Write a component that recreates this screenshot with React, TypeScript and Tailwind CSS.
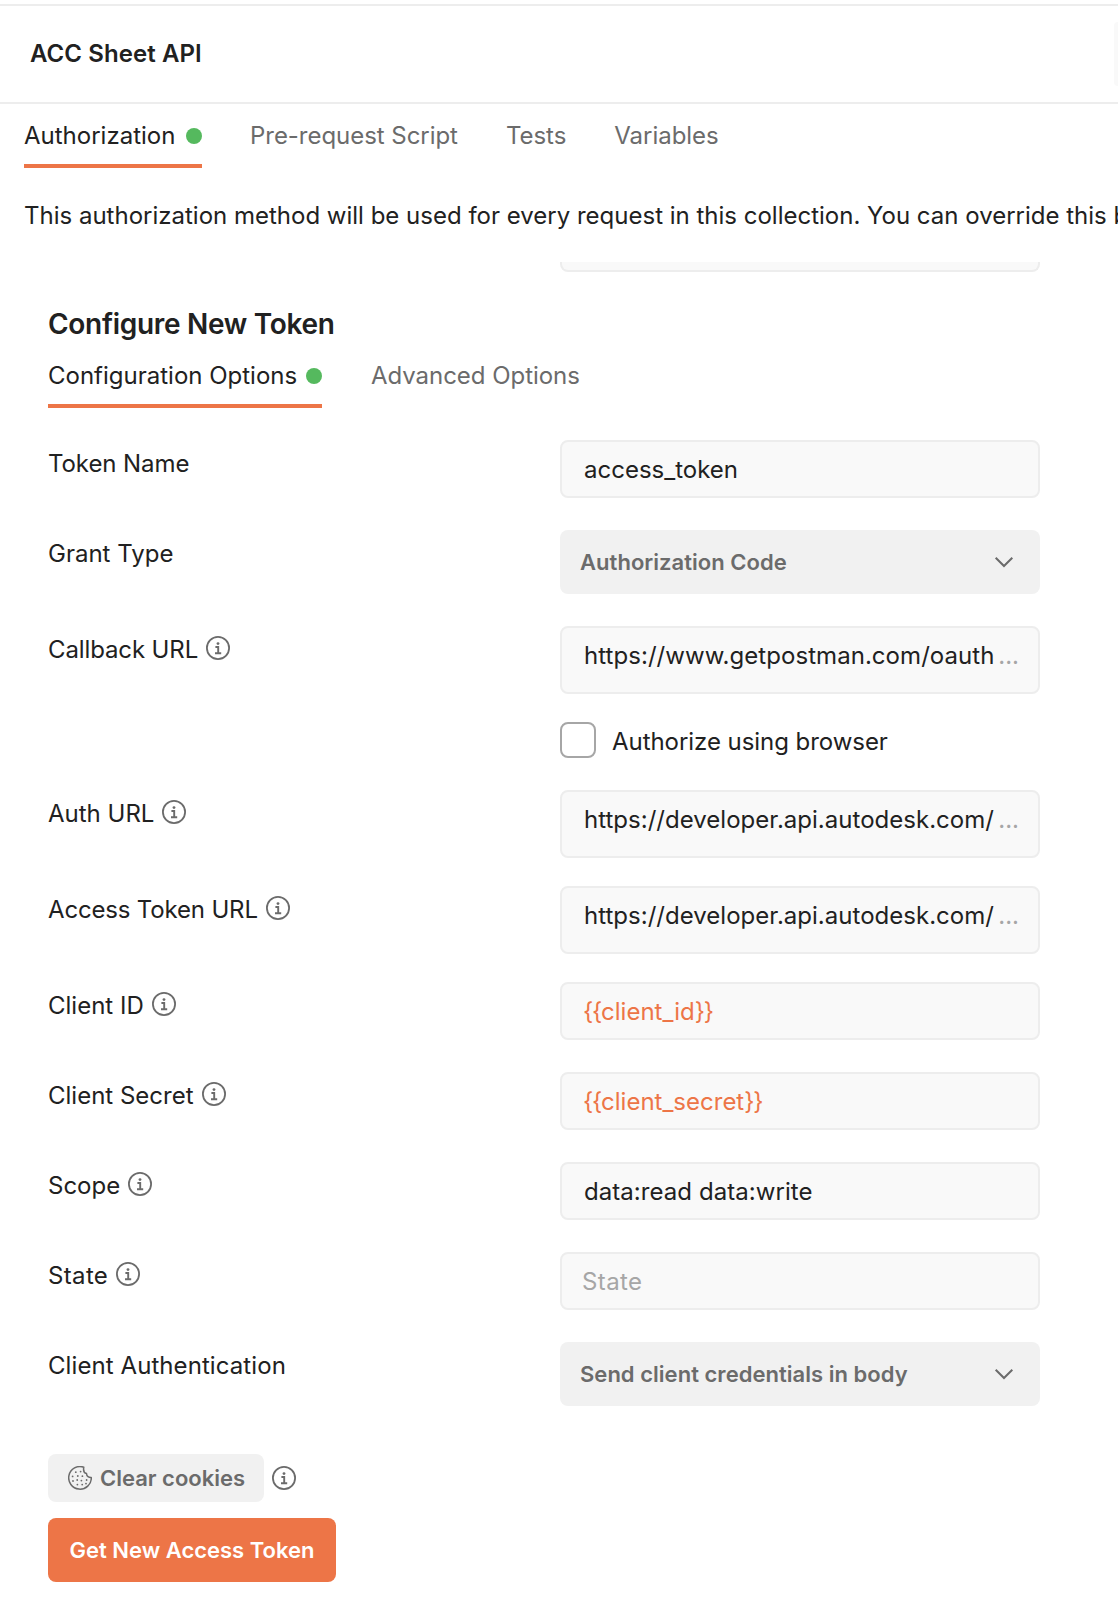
import type { ReactNode } from "react";

function InfoIcon() {
  return (
    <svg width="24" height="24" viewBox="0 0 24 24" fill="none" stroke="#6b6b6b" className="shrink-0">
      <circle cx="12" cy="12" r="11.1" strokeWidth="1.8" />
      <path d="M9.4 11h2.8v6.2M9 17.2h6.2" strokeWidth="1.9" />
      <circle cx="12" cy="7.6" r="1.4" fill="#6b6b6b" stroke="none" />
    </svg>
  );
}

const crumbs = [
  [7.8, 6.2], [12.6, 5.6], [4.6, 10.4], [9.8, 10], [14.4, 10.2],
  [5, 15], [9.2, 14], [13.4, 14.6], [18.6, 14], [9.4, 18.6], [14.2, 18.6], [18, 17.6],
];

function CookieIcon() {
  return (
    <svg width="24" height="24" viewBox="0 0 24 24" fill="none" stroke="#6b6b6b" className="shrink-0">
      <path
        d="M15.800 1.200A11.300 11.300 0 1 0 23.300 11.500C20.800 11.600 18.600 10.600 18.500 7.600 16.200 7 15.200 4.300 15.800 1.200Z"
        strokeWidth="1.500"
        strokeLinejoin="round"
      />
      {crumbs.map(([x, y]) => (
        <circle key={`${x}-${y}`} cx={x} cy={y} r="0.9" fill="#6b6b6b" stroke="none" />
      ))}
    </svg>
  );
}

function Chevron() {
  return (
    <svg width="20" height="12" viewBox="0 0 20 12" fill="none" stroke="#6b6b6b" strokeWidth="2">
      <path d="M1.700 1.700 10 10l8.300-8.300" />
    </svg>
  );
}

function Tab({ label, active, width = "" }: { label: string; active?: boolean; width?: string }) {
  return active ? (
    <div className={`flex h-16 items-center justify-between border-b-4 border-[#ed7547] pt-1 text-[#212121] ${width}`}>
      <span>{label}</span>
      <span className="size-4 rounded-full bg-[#55b95e]" />
    </div>
  ) : (
    <div className="flex h-16 items-center border-b-4 border-transparent pt-1 tracking-[-0.04px] text-[#6b6b6b]">
      {label}
    </div>
  );
}

type RowProps = { label?: string; info?: boolean; tracking?: string; children: ReactNode };

function Row({ label, info, tracking = "", children }: RowProps) {
  return (
    <div className="flex items-start">
      <div className="flex w-[512px] gap-2">
        <span className={`pt-2 ${tracking}`}>{label}</span>
        {info && (
          <span className="pt-[10px]">
            <InfoIcon />
          </span>
        )}
      </div>
      {children}
    </div>
  );
}

const box = "w-[480px] rounded-lg border-2 border-[#ededed] bg-[#f9f9f9]";

function Field({ children, className = "pl-[22px]" }: { children: ReactNode; className?: string }) {
  return <div className={`${box} mb-8 h-[58px] pt-3 ${className}`}>{children}</div>;
}

function Variable({ name }: { name: string }) {
  return (
    <span className="text-[#ed7547]">
      <span className="tracking-[-1.2px]">{"{{"}</span>
      {name}
      <span className="tracking-[-1.2px]">{"}}"}</span>
    </span>
  );
}

function UrlField({ value, tracking = "" }: { value: string; tracking?: string }) {
  return (
    <div className={`${box} mb-7 flex h-[68px] justify-between pt-3 pr-[19px] pl-[22px]`}>
      <span className={tracking}>{value}</span>
      <span className="text-[#a6a6a6]">...</span>
    </div>
  );
}

function Select({ value }: { value: string }) {
  return (
    <div className="mb-8 flex h-16 w-[480px] items-center justify-between rounded-lg bg-[#f1f1f1] pr-[26px] pl-5 text-[22px] font-semibold tracking-[0.03px] text-[#6b6b6b]">
      {value}
      <Chevron />
    </div>
  );
}

export default function App() {
  return (
    <div className="h-[1616px] w-[1118px] overflow-hidden bg-white pt-1 font-['Inter',sans-serif] text-[24px] leading-8 whitespace-nowrap text-[#212121]">
      <header className="flex h-[100px] items-center justify-between border-y-2 border-[#ededed] pl-[30px]">
        <h1 className="font-semibold tracking-[0.08px]">ACC Sheet API</h1>
        <div className="h-16 w-1 rounded-l-lg bg-[#f9f9f9]" />
      </header>
      <nav className="flex gap-12 px-6">
        <Tab label="Authorization" active width="w-[178px]" />
        <Tab label="Pre-request Script" />
        <Tab label="Tests" />
        <Tab label="Variables" />
      </nav>
      <p className="mt-8 h-[62px] px-6">
        This authorization method will be used for every request in this collection. You can override this by
      </p>
      <main className="px-12">
        <div className="ml-[512px] h-[10px] w-[480px] rounded-b-lg border-2 border-t-0 border-[#ededed] bg-[#f9f9f9]" />
        <h2 className="mt-9 h-9 text-[28px] leading-8 font-semibold tracking-[-0.3px]">Configure New Token</h2>
        <nav className="mb-8 flex gap-[49px]">
          <Tab label="Configuration Options" active width="w-[274px]" />
          <Tab label="Advanced Options" />
        </nav>
        <Row label="Token Name" tracking="tracking-[-0.08px]">
          <Field>access_token</Field>
        </Row>
        <Row label="Grant Type">
          <Select value="Authorization Code" />
        </Row>
        <Row label="Callback URL" info tracking="tracking-[-0.12px]">
          <UrlField value="https://www.getpostman.com/oauth" tracking="tracking-[0.05px]" />
        </Row>
        <Row>
          <div className="mb-8 flex h-9 items-center gap-4">
            <div className="size-9 rounded-lg border-2 border-[#a6a6a6]" />
            <span className="pt-1 tracking-[-0.05px]">Authorize using browser</span>
          </div>
        </Row>
        <Row label="Auth URL" info>
          <UrlField value="https://developer.api.autodesk.com/" tracking="tracking-[0.02px]" />
        </Row>
        <Row label="Access Token URL" info tracking="tracking-[-0.17px]">
          <UrlField value="https://developer.api.autodesk.com/" tracking="tracking-[0.02px]" />
        </Row>
        <Row label="Client ID" info>
          <Field className="pl-[21px]">
            <Variable name="client_id" />
          </Field>
        </Row>
        <Row label="Client Secret" info>
          <Field className="pl-[21px]">
            <Variable name="client_secret" />
          </Field>
        </Row>
        <Row label="Scope" info>
          <Field className="pl-[22px] tracking-[0.06px]">data:read data:write</Field>
        </Row>
        <Row label="State" info tracking="tracking-[0.35px]">
          <Field className="pl-5 tracking-[0.4px] text-[#a6a6a6]">State</Field>
        </Row>
        <Row label="Client Authentication" tracking="tracking-[0.08px]">
          <Select value="Send client credentials in body" />
        </Row>
        <div className="mt-4 flex items-center gap-2">
          <button className="flex h-12 w-[216px] items-center gap-2 rounded-lg bg-[#f1f1f1] pl-5 text-[22px] font-semibold text-[#6b6b6b]">
            <CookieIcon />
            Clear cookies
          </button>
          <InfoIcon />
        </div>
        <button className="mt-4 flex h-16 w-[288px] items-center justify-center rounded-lg bg-[#ed7547] text-[22px] font-semibold text-white">
          Get New Access Token
        </button>
      </main>
    </div>
  );
}
